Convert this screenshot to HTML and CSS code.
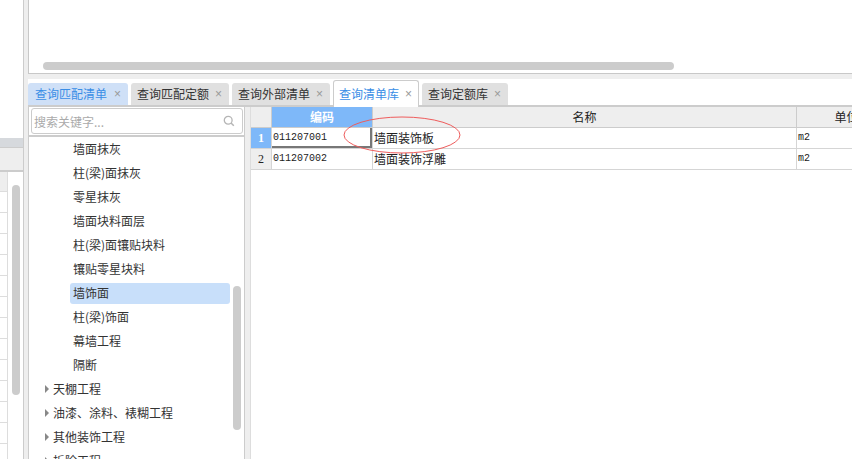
FILE: index.html

```html
<!DOCTYPE html>
<html lang="zh-CN">
<head>
  <meta charset="UTF-8">
  <title>查询清单库</title>
  <link rel="stylesheet" href="styles.css">
</head>
<body>
  <div class="side">
    <div class="side-blank"></div>
    <div class="side-band"></div>
    <div class="side-head"></div>
    <div class="side-rows">
      <div class="side-first"></div>
      <div class="side-thumb"></div>
    </div>
  </div>
  <div class="gutter"></div>
  <div class="main">
    <div class="top-panel">
      <div class="h-thumb"></div>
    </div>
    <div class="top-strip"></div>
    <div class="tabs">
      <div class="tab tab-blue">查询匹配清单<span class="close">×</span></div>
      <div class="tab">查询匹配定额<span class="close">×</span></div>
      <div class="tab">查询外部清单<span class="close">×</span></div>
      <div class="tab tab-active">查询清单库<span class="close">×</span></div>
      <div class="tab tab-short">查询定额库<span class="close">×</span></div>
    </div>
    <div class="content">
      <div class="tree-panel">
        <div class="search">
          <span class="search-text">搜索关键字...</span>
          <svg class="search-icon" width="12" height="12" viewBox="0 0 12 12">
            <circle cx="5.2" cy="5.2" r="3.9" fill="none" stroke="#b5b5b5" stroke-width="1.3"/>
            <path d="M8 8l2.8 2.8" stroke="#b5b5b5" stroke-width="1.5"/>
          </svg>
        </div>
        <div class="tree">
          <div class="leaf">墙面抹灰</div>
          <div class="leaf">柱(梁)面抹灰</div>
          <div class="leaf">零星抹灰</div>
          <div class="leaf">墙面块料面层</div>
          <div class="leaf">柱(梁)面镶贴块料</div>
          <div class="leaf">镶贴零星块料</div>
          <div class="leaf selected">墙饰面</div>
          <div class="leaf">柱(梁)饰面</div>
          <div class="leaf">幕墙工程</div>
          <div class="leaf">隔断</div>
          <div class="branch"><i class="arrow"></i>天棚工程</div>
          <div class="branch"><i class="arrow"></i>油漆、涂料、裱糊工程</div>
          <div class="branch"><i class="arrow"></i>其他装饰工程</div>
          <div class="branch"><i class="arrow"></i>拆除工程</div>
          <div class="tree-thumb"></div>
        </div>
      </div>
      <div class="splitter"></div>
      <div class="grid">
        <div class="row row-head">
          <div class="cell c-num"></div>
          <div class="cell c-code head-blue">编码</div>
          <div class="cell c-name">名称</div>
          <div class="cell c-unit">单位</div>
        </div>
        <div class="row">
          <div class="cell c-num num-blue">1</div>
          <div class="cell c-code cur">011207001</div>
          <div class="cell c-name">墙面装饰板</div>
          <div class="cell c-unit">m2</div>
        </div>
        <div class="row">
          <div class="cell c-num">2</div>
          <div class="cell c-code">011207002</div>
          <div class="cell c-name">墙面装饰浮雕</div>
          <div class="cell c-unit">m2</div>
        </div>
        <svg class="mark" width="120" height="40" viewBox="0 0 120 40">
          <ellipse cx="59" cy="19" rx="58" ry="18" fill="none" stroke="#ee5c5c" stroke-width="1"/>
        </svg>
      </div>
    </div>
  </div>
</body>
</html>
```

FILE: styles.css

```css
html, body {
  margin: 0;
  padding: 0;
}
body {
  width: 852px;
  height: 459px;
  overflow: hidden;
  display: flex;
  background-color: #fff;
  font-family: "Noto Sans CJK SC", "Liberation Sans", sans-serif;
  font-size: 12px;
  color: #333;
}

/* left pane */
.side {
  width: 23px;
  border-right: 1px solid #ccc;
  display: flex;
  flex-direction: column;
  flex-shrink: 0;
}
.side-blank {
  height: 138px;
}
.side-band {
  height: 9px;
  background-color: #d6d9dd;
  border-bottom: 1px solid #ccc;
}
.side-head {
  height: 22px;
  background-color: #eee;
  border-bottom: 2px solid #ccc;
}
.side-rows {
  flex: 1;
  position: relative;
  background-image: linear-gradient(#ddd, #ddd),
    repeating-linear-gradient(180deg, #ddd 0, #ddd 1px, transparent 1px, transparent 21px);
  background-size: 1px 100%, 7px 100%;
  background-position: 7px 0, 0 19px;
  background-repeat: no-repeat;
}
.side-first {
  width: 7px;
  height: 19px;
  background-color: #eee;
}
.side-thumb {
  position: absolute;
  left: 12px;
  top: 13px;
  width: 8px;
  height: 210px;
  background-color: #ccc;
  border-radius: 4px;
}
.gutter {
  width: 4px;
  background-color: #eee;
  flex-shrink: 0;
}

/* main */
.main {
  flex: 1;
  min-width: 0;
  display: flex;
  flex-direction: column;
}
.top-panel {
  height: 73px;
  border-left: 1px solid #c8c8c8;
  border-bottom: 1px solid #c8c8c8;
  position: relative;
}
.h-thumb {
  position: absolute;
  left: 14px;
  top: 62px;
  width: 631px;
  height: 8px;
  background-color: #ccc;
  border-radius: 4px;
}
.top-strip {
  height: 5px;
  background-color: #eee;
}

/* tabs */
.tabs {
  height: 26px;
  display: flex;
  align-items: flex-end;
  gap: 3px;
  border-bottom: 2px solid #ccc;
}
.tab {
  width: 98px;
  height: 22px;
  line-height: 21px;
  padding: 0 7px 0 6px;
  box-sizing: border-box;
  display: flex;
  justify-content: space-between;
  background-color: #e0e0e0;
  border-radius: 3px 3px 0 0;
  white-space: nowrap;
}
.tab-blue {
  width: 100px;
  padding-left: 7px;
  background-color: #cfe0f7;
  color: #3a8ee6;
}
.tab-active {
  width: 86px;
  height: 27px;
  line-height: 25px;
  margin-bottom: -2px;
  padding: 0 6px 0 5px;
  background-color: #fff;
  color: #3a8ee6;
  border: 1px solid #ccc;
  border-bottom: none;
}
.tab-short {
  width: 86px;
}
.close {
  margin-top: 1px;
  font-family: "Liberation Sans", sans-serif;
  font-size: 12px;
  color: #999;
}

/* tree */
.content {
  flex: 1;
  min-height: 0;
  display: flex;
}
.tree-panel {
  width: 216px;
  box-sizing: border-box;
  border-left: 1px solid #ccc;
  display: flex;
  flex-direction: column;
  flex-shrink: 0;
}
.search {
  height: 26px;
  box-sizing: border-box;
  margin: 1px 1px 0 2px;
  border: 1px solid #ccc;
  border-radius: 3px;
  display: flex;
  align-items: center;
  justify-content: space-between;
  padding: 0 7px 0 2px;
}
.search-text {
  color: #aaa;
}
.tree {
  flex: 1;
  margin-top: 1px;
  border-top: 2px solid #ccc;
  position: relative;
  overflow: hidden;
}
.leaf, .branch {
  height: 24px;
  line-height: 24px;
  white-space: nowrap;
}
.leaf {
  padding-left: 44px;
}
.branch {
  padding-left: 24px;
  position: relative;
}
.arrow {
  position: absolute;
  left: 16px;
  top: 8px;
  border-left: 4px solid #888;
  border-top: 4px solid transparent;
  border-bottom: 4px solid transparent;
}
.selected {
  position: relative;
  z-index: 0;
}
.selected::before {
  content: "";
  position: absolute;
  left: 41px;
  top: 2px;
  width: 160px;
  height: 21px;
  background-color: #c8dffa;
  border-radius: 3px;
  z-index: -1;
}
.tree-thumb {
  position: absolute;
  left: 204px;
  top: 149px;
  width: 8px;
  height: 144px;
  background-color: #ccc;
  border-radius: 4px;
}
.splitter {
  width: 5px;
  background-color: #eee;
  border-left: 1px solid #ccc;
  border-right: 1px solid #ddd;
  flex-shrink: 0;
}

/* grid */
.grid {
  flex: 1;
  min-width: 0;
  position: relative;
  overflow: hidden;
}
.row {
  display: flex;
  height: 20px;
  border-bottom: 1px solid #d5d5d5;
}
.row-head {
  background-color: #eee;
  border-bottom-color: #ccc;
}
.cell {
  height: 20px;
  line-height: 20px;
  border-right: 1px solid #d5d5d5;
  flex-shrink: 0;
  padding-left: 1px;
  white-space: nowrap;
  box-sizing: border-box;
  font-family: "Liberation Mono", "Noto Sans CJK SC", monospace;
  font-size: 10px;
  color: #222;
}
.row-head .cell {
  text-align: center;
  font-family: "Noto Sans CJK SC", sans-serif;
  font-size: 12px;
  border-right-color: #ccc;
  padding-left: 0;
}
.c-num {
  width: 21px;
  text-align: center;
  padding-left: 0;
  font-family: "Liberation Serif", serif;
  font-size: 12px;
  background-color: #eee;
}
.c-code {
  width: 101px;
}
.c-name {
  width: 424px;
  font-family: "Noto Sans CJK SC", sans-serif;
  font-size: 12px;
}
.c-unit {
  width: 100px;
}
.row-head .head-blue {
  background-color: #7eb8f9;
  color: #fff;
  font-weight: bold;
}
.num-blue {
  background-color: #7eb8f9;
  color: #fff;
  font-weight: bold;
}
.cur {
  box-shadow: inset 0 -2px 0 #777, inset -2px 0 0 #777;
}
.mark {
  position: absolute;
  left: 92px;
  top: 9px;
}
```
